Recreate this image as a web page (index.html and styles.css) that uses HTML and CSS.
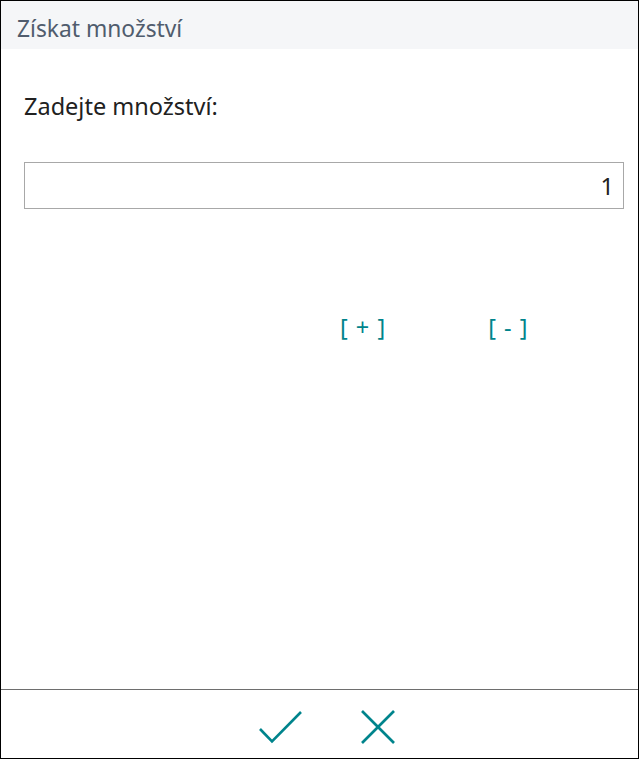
FILE: index.html
```html
<!DOCTYPE html>
<html>
<head>
    <meta charset="utf-8">
    <title>Získat množství</title>
    <link rel="stylesheet" href="styles.css">
</head>
<body>
    <div class="dialog">
        <header class="dialog-header">
            <h1>Získat množství</h1>
        </header>
        <div class="dialog-body">
            <label for="qty" class="qty-label">Zadejte množství:</label>
            <input type="text" id="qty" class="qty-input" value="1">
            <div class="step-buttons">
                <button class="step-btn">[ + ]</button>
                <button class="step-btn">[ - ]</button>
            </div>
        </div>
        <footer class="dialog-footer">
            <button class="icon-btn" title="OK">
                <svg width="46" height="36" viewBox="0 0 46 36">
                    <polyline points="3,20 15,32.5 44,3" fill="none" stroke="#00848c" stroke-width="2.6"/>
                </svg>
            </button>
            <button class="icon-btn" title="Zrušit">
                <svg width="38" height="38" viewBox="0 0 38 38">
                    <line x1="3" y1="3" x2="35" y2="35" stroke="#00848c" stroke-width="2.6"/>
                    <line x1="35" y1="3" x2="3" y2="35" stroke="#00848c" stroke-width="2.6"/>
                </svg>
            </button>
        </footer>
    </div>
</body>
</html>
```

FILE: styles.css
```css
body {
    margin: 0;
    padding: 0;
    font-family: "Noto Sans", "Open Sans", sans-serif;
    background-color: #fff;
}

.dialog {
    width: 639px;
    height: 759px;
    box-sizing: border-box;
    border: 1px solid #000;
    display: flex;
    flex-direction: column;
    background-color: #fff;
}

.dialog-header {
    height: 48px;
    box-sizing: border-box;
    background-color: #f5f6f8;
    padding: 12px 0 0 16px;
}

.dialog-header h1 {
    margin: 0;
    font-size: 22.8px;
    font-weight: normal;
    line-height: 1.362;
    color: #505c6d;
    white-space: nowrap;
}

.dialog-body {
    flex: 1;
    padding: 41px 14px 0 23px;
}

.qty-label {
    display: block;
    font-size: 23.5px;
    color: #212121;
    line-height: 32px;
}

.qty-input {
    display: block;
    margin-top: 40px;
    width: 600px;
    height: 47px;
    box-sizing: border-box;
    border: 1px solid #a8a8a8;
    padding: 0 9px;
    font-family: inherit;
    font-size: 23.5px;
    color: #212121;
    text-align: right;
    outline: none;
}

.step-buttons {
    display: flex;
    gap: 102px;
    margin-top: 102px;
    padding-left: 316px;
}

.step-btn {
    background: none;
    border: none;
    padding: 0;
    font-family: inherit;
    font-size: 23.5px;
    line-height: 32px;
    letter-spacing: 1px;
    color: #00848c;
    cursor: pointer;
}

.dialog-footer {
    height: 69px;
    border-top: 1px solid #6e6e6e;
    display: flex;
    justify-content: center;
    align-items: center;
    gap: 56px;
    padding-left: 14px;
    padding-top: 6px;
    box-sizing: border-box;
}

.icon-btn {
    background: none;
    border: none;
    padding: 0;
    cursor: pointer;
    display: flex;
}
```
